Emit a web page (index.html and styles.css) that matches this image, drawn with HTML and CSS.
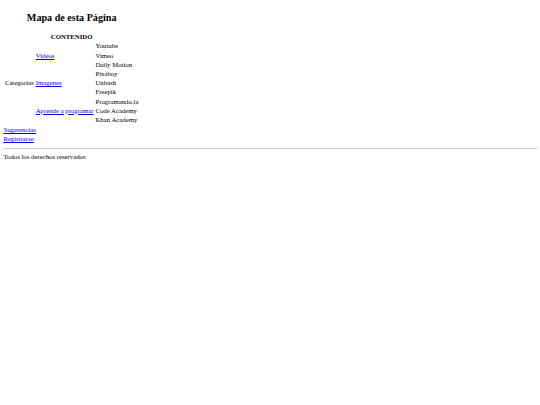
FILE: index.html
```html
<!DOCTYPE html>
<html lang="es">
<head>
<meta charset="utf-8">
<title>Mapa de esta Página</title>
<link rel="stylesheet" href="styles.css">
</head>
<body>
<table class="mapa">
  <caption><h2 class="titulo">Mapa de esta Página</h2></caption>
  <tr><th colspan="3">CONTENIDO</th></tr>
  <tr>
    <td rowspan="9">Categorías</td>
    <td rowspan="3"><a href="#">Videos</a></td>
    <td>Youtube</td>
  </tr>
  <tr><td>Vimeo</td></tr>
  <tr><td>Daily Motion</td></tr>
  <tr>
    <td rowspan="3"><a href="#">Imagenes</a></td>
    <td>Pixaboy</td>
  </tr>
  <tr><td>Unbash</td></tr>
  <tr><td>Freepik</td></tr>
  <tr>
    <td rowspan="3"><a href="#">Aprende a programar</a></td>
    <td>Programando.la</td>
  </tr>
  <tr><td>Code Academy</td></tr>
  <tr><td>Khan Academy</td></tr>
</table>
<nav class="enlaces">
  <a href="#">Sugerencias</a><br>
  <a href="#">Registrarse</a>
</nav>
<hr class="linea">
<footer class="pie">Todos los derechos reservados</footer>
</body>
</html>
```

FILE: styles.css
```css
html { background: #fff; }
body {
  margin: 3.375px;
  font-family: "Liberation Serif", "Times New Roman", serif;
  font-size: 6.75px;
  line-height: 9px;
  color: #000;
}
.mapa {
  border-spacing: 1px;
}
.mapa td, .mapa th {
  padding: 0 0.5px;
  line-height: 8.2px;
}
.titulo {
  font-size: 10.125px;
  line-height: 12px;
  margin: 8.4px 0;
}
a { color: #0000ee; }
.linea {
  margin: 4.5px 0 3.4px;
  border: 0;
  border-top: 1px solid #cfcfcf;
  height: 0;
}
```
